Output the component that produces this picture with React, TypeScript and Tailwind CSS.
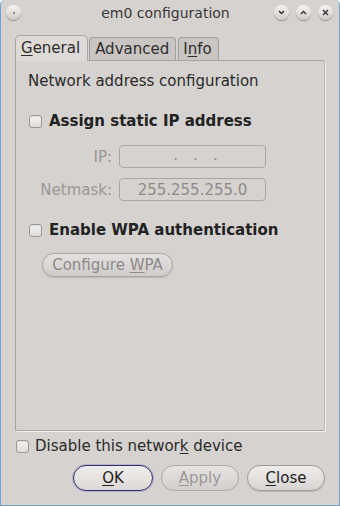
import React from "react";

const font = { fontFamily: '"DejaVu Sans", sans-serif' };

function Check({ className = "" }: { className?: string }) {
  return (
    <span
      className={`inline-block shrink-0 w-[13px] h-[13px] rounded-[3px] border border-[#9a9795] bg-gradient-to-b from-[#f4f3f2] to-[#e0dddb] shadow-[inset_0_1px_1px_rgba(0,0,0,0.08)] ${className}`}
    />
  );
}

function TitleBtn({ children }: { children?: React.ReactNode }) {
  return (
    <span className="w-[15px] h-[15px] rounded-full bg-gradient-to-b from-[#f6f5f4] to-[#cfcbc9] shadow-[0_1px_1px_rgba(0,0,0,0.35)] flex items-center justify-center">
      {children}
    </span>
  );
}

export default function App() {
  return (
    <div
      className="w-[340px] h-[506px] bg-[#d6d2d0] border-x border-b border-[#6ea3d1] rounded-t-[5px] flex flex-col text-[#2f2d2b] overflow-hidden"
      style={font}
    >
      {/* title bar */}
      <div className="h-[25px] flex items-center pl-[5px] pr-[6px]">
        <TitleBtn>
          <span className="w-[2px] h-[2px] rounded-full bg-[#777]" />
        </TitleBtn>
        <div className="flex-1 text-center text-[14px] leading-[18px] text-[#3a3836] pl-[36px]">em0 configuration</div>
        <div className="flex gap-[7px]">
          <TitleBtn>
            <svg width="7" height="5" viewBox="0 0 7 5"><path d="M1 1l2.5 2.5L6 1" fill="none" stroke="#333" strokeWidth="1.4" /></svg>
          </TitleBtn>
          <TitleBtn>
            <svg width="7" height="5" viewBox="0 0 7 5"><path d="M1 4l2.5-2.5L6 4" fill="none" stroke="#333" strokeWidth="1.4" /></svg>
          </TitleBtn>
          <TitleBtn>
            <svg width="7" height="7" viewBox="0 0 7 7"><path d="M1 1l5 5M6 1l-5 5" fill="none" stroke="#333" strokeWidth="1.4" /></svg>
          </TitleBtn>
        </div>
      </div>

      {/* tabs */}
      <div className="flex items-end pl-[14px] mt-[9px] h-[26px] relative z-10">
        <div className="h-[26px] pl-[5px] pr-[7px] flex items-center text-[15px] bg-[#dedad8] border border-b-0 border-[#a8a4a2] rounded-t-[5px] -mb-[1px] pb-[1px]">
          <span><u className="underline-offset-2">G</u>eneral</span>
        </div>
        <div className="h-[23px] pl-[5px] pr-[6px] flex items-center text-[15px] bg-[#c9c5c3] border border-b-0 border-[#a29e9c] rounded-t-[4px] ml-[1px]">
          Advanced
        </div>
        <div className="h-[23px] pl-[4px] pr-[6px] flex items-center text-[15px] bg-[#c9c5c3] border border-b-0 border-[#a29e9c] rounded-t-[4px] ml-[2px]">
          <span>I<u className="underline-offset-2">n</u>fo</span>
        </div>
      </div>

      {/* panel */}
      <div className="mx-[14px] h-[371px] border border-[#a9a5a3] border-r-[#bdb9b7] shadow-[1px_1px_0_#f2f0ef] rounded-[2px] flex flex-col px-[12px] pt-[11px]">
        <div className="text-[15px] leading-[18px] text-[#2b2a29]">Network address configuration</div>

        <div className="flex items-center h-[18px] mt-[22px] gap-[7px] pl-[1px]">
          <Check />
          <span className="text-[15px] leading-[18px] font-bold text-[#222]">Assign static IP address</span>
        </div>

        <div className="grid grid-cols-[84px_147px] gap-x-[7px] gap-y-[10px] mt-[15px] text-[15px] leading-[18px] text-[#9a9795] items-center">
          <div className="text-right">IP:</div>
          <div className="h-[23px] border border-[#a9a6a4] rounded-[4px] flex items-end justify-center gap-[15px] pb-[3px] pl-[6px] text-[#8e8b89]">
            <span>.</span>
            <span>.</span>
            <span>.</span>
          </div>
          <div className="text-right">Netmask:</div>
          <div className="h-[23px] border border-[#a9a6a4] rounded-[4px] flex items-center justify-center text-[#8e8b89]">255.255.255.0</div>
        </div>

        <div className="flex items-center h-[18px] mt-[20px] gap-[7px] pl-[1px]">
          <Check />
          <span className="text-[15px] leading-[18px] font-bold text-[#222]">Enable WPA authentication</span>
        </div>

        <div className="mt-[14px] ml-[14px]">
          <div className="inline-flex items-center h-[24px] w-[131px] justify-center rounded-full border border-[#a8a5a3] bg-gradient-to-b from-[#e4e1e0] to-[#d0ccca] text-[15px] text-[#8c8987] shadow-[0_1px_1px_rgba(0,0,0,0.12)]">
            <span>Configure <u className="underline-offset-2">W</u>PA</span>
          </div>
        </div>
      </div>

      {/* bottom */}
      <div className="flex items-center h-[18px] gap-[6px] ml-[15px] mt-[6px]">
        <Check />
        <span className="text-[15px] leading-[18px] text-[#2b2a29]">Disable this networ<u className="underline-offset-2">k</u> device</span>
      </div>

      <div className="flex justify-end gap-[8px] pr-[14px] mt-[10px]">
        <div className="w-[80px] h-[26px] rounded-full border-[1.5px] border-[#2f2d6b] bg-gradient-to-b from-[#f0eeed] to-[#dcd8d6] flex items-center justify-center text-[15px] text-[#222] shadow-[0_0_0_1px_rgba(90,90,170,0.25)]">
          <span><u className="underline-offset-2">O</u>K</span>
        </div>
        <div className="w-[78px] h-[26px] rounded-full border border-[#aeaaa8] bg-gradient-to-b from-[#e6e3e2] to-[#d3cfcd] flex items-center justify-center text-[15px] text-[#9b9896]">
          <span><u className="underline-offset-2">A</u>pply</span>
        </div>
        <div className="w-[78px] h-[26px] rounded-full border border-[#9f9b99] bg-gradient-to-b from-[#efedec] to-[#d8d4d2] flex items-center justify-center text-[15px] text-[#222] shadow-[0_1px_1px_rgba(0,0,0,0.15)]">
          <span><u className="underline-offset-2">C</u>lose</span>
        </div>
      </div>
    </div>
  );
}
